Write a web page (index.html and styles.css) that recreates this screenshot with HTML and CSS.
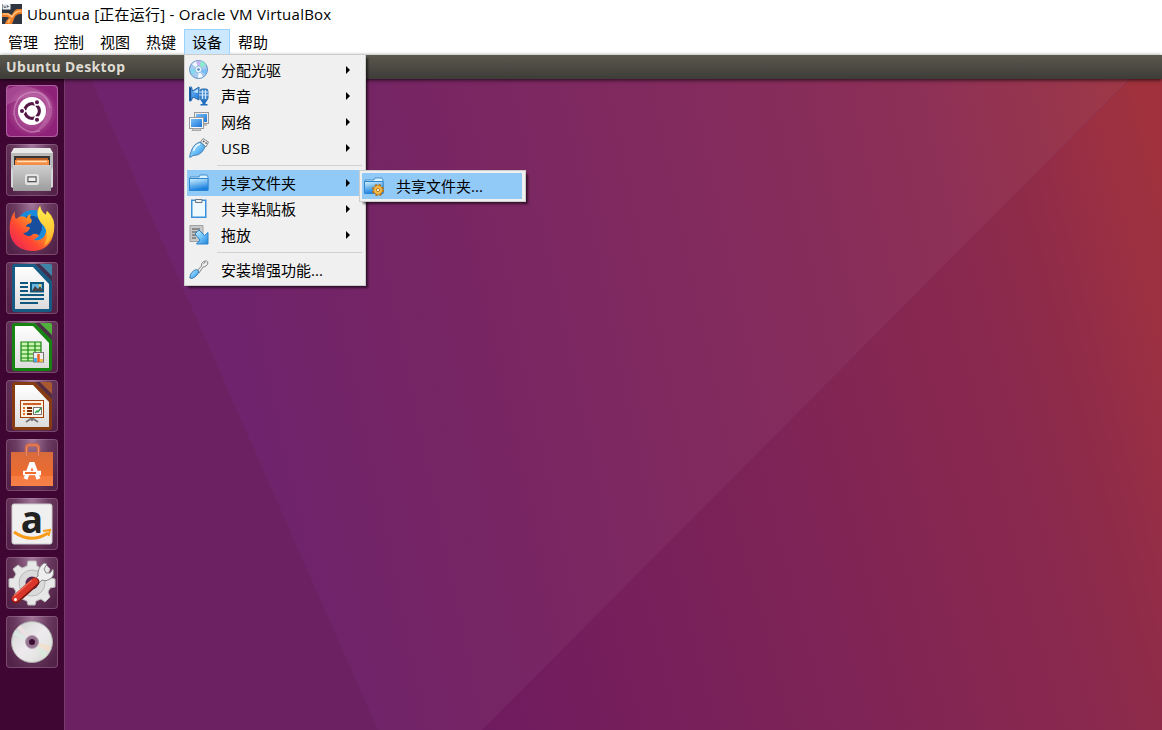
FILE: index.html
```html
<!DOCTYPE html>
<html lang="zh-CN">
<head>
<meta charset="utf-8">
<title>Ubuntua [正在运行] - Oracle VM VirtualBox</title>
<link rel="stylesheet" href="styles.css">
</head>
<body>
<svg class="defs" width="0" height="0" aria-hidden="true">
  <defs>
    <linearGradient id="blue" x1="0" y1="0" x2="1" y2="1"><stop offset="0" stop-color="#d5f1ff"/><stop offset=".5" stop-color="#6fc2fa"/><stop offset="1" stop-color="#2384dd"/></linearGradient>
    <linearGradient id="screen" x1="0" y1="0" x2="1" y2="1"><stop offset="0" stop-color="#7cc0f8"/><stop offset="1" stop-color="#1a74d8"/></linearGradient>
    <linearGradient id="blueV" x1="0" y1="0" x2=".3" y2="1"><stop offset="0" stop-color="#d4f3ff"/><stop offset="1" stop-color="#1880df"/></linearGradient>
    <linearGradient id="paper" x1="0" y1="0" x2="0" y2="1"><stop offset="0" stop-color="#fff"/><stop offset="1" stop-color="#dcdcdc"/></linearGradient>
    <linearGradient id="metal" x1="0" y1="0" x2="0" y2="1"><stop offset="0" stop-color="#cfcfcf"/><stop offset="1" stop-color="#9c9c9c"/></linearGradient>
    <linearGradient id="disc" x1="0" y1="0" x2="1" y2="1"><stop offset="0" stop-color="#c6c6c8"/><stop offset=".3" stop-color="#e2e2e2"/><stop offset=".5" stop-color="#eeeaee"/><stop offset=".7" stop-color="#e6e6e4"/><stop offset="1" stop-color="#cfcfcf"/></linearGradient>
    <linearGradient id="fox" x1="1" y1="0" x2="0" y2="1"><stop offset="0" stop-color="#ffe63e"/><stop offset=".38" stop-color="#ff9a22"/><stop offset=".66" stop-color="#ff4634"/><stop offset="1" stop-color="#e91a63"/></linearGradient>
    <linearGradient id="flame" x1="0" y1="0" x2="0" y2="1"><stop offset="0" stop-color="#fff24d"/><stop offset="1" stop-color="#ffab2a"/></linearGradient>
    <linearGradient id="bag" x1="0" y1="0" x2="0" y2="1"><stop offset="0" stop-color="#d96b3c"/><stop offset=".7" stop-color="#ee6c2f"/><stop offset=".71" stop-color="#f67b40"/><stop offset="1" stop-color="#f58149"/></linearGradient>
    <radialGradient id="swirl"><stop offset="0" stop-color="#c277ae"/><stop offset=".75" stop-color="#a03a88"/><stop offset="1" stop-color="#8e2278"/></radialGradient>
  </defs>
</svg>

<header class="titlebar">
  <svg class="app-icon" width="20" height="20" viewBox="0 0 20 20"><rect width="20" height="20" fill="#2f3541"/><path d="M0 9h6l4 2q2-5 5-6h5v5h-3q-4 1-5 5l-2 5H3q1-4 4-6l-2-1H0z" fill="#ee7d28"/><path d="M1 10h5l4 3q3-6 9-6" fill="none" stroke="#ffc07a" stroke-width="1.600"/><path d="m8 15-2 4" stroke="#ffb25e" stroke-width="2"/><rect x=".5" width="8" height="5.500" fill="#edf0f2"/><path d="M2 1.500v2h2v-2m1.500 2v-2L7 3" stroke="#68717b" fill="none"/></svg>
  <span>Ubuntua [正在运行] - Oracle VM VirtualBox</span>
</header>

<nav class="menubar">
  <span class="top">管理</span><span class="top">控制</span><span class="top">视图</span><span class="top">热键</span>
  <div class="top open">设备
    <div class="menu">
      <div class="item">
        <svg class="mi" viewBox="0 0 20 20"><circle cx="9.500" cy="9.500" r="9" fill="#a9ccee" stroke="#5b8fc4"/><path d="M10 10 3 4l4-3z" fill="#f1f9ff"/><path d="m10 10-3-9 5-.4z" fill="#c8b4f0"/><path d="m10 10 2-9.400 5 3.700z" fill="#8bebcb"/><path d="m10 10 8-1-1 6z" fill="#78bdf8"/><path d="m10 10 4 7-5 1z" fill="#f7fbff"/><path d="m10 10-7 5-2-6z" fill="#81d8ef"/><circle cx="9.500" cy="9.500" r="3.400" fill="#e8f3fc" stroke="#79a8d3" stroke-width=".7"/><circle cx="9.500" cy="9.500" r="1.200" fill="#4281c3"/></svg>
        <span>分配光驱</span><i class="arrow"></i></div>
      <div class="item">
        <svg class="mi" viewBox="0 0 20 20"><path d="M.5 1h2l1 4L10 1v13l-6-3-2 4H.5z" fill="url(#screen)" stroke="#2869aa"/><path d="M1.500 2v12" stroke="#104f94" stroke-width="1.500"/><path d="m4 6 5-3v4z" fill="#bfe2fc"/><rect x="11" y="3" width="8" height="11" rx="2" fill="#4d91d4" stroke="#286caf"/><path d="M10 6h9.500M10 9h9.500M13.500 4v9M16.500 4v9" stroke="#d7edff" stroke-width=".9"/><path d="M11.500 14h7L16.500 17v1h2v1.500h-7V18h2v-1z" fill="#236fbf"/></svg>
        <span>声音</span><i class="arrow"></i></div>
      <div class="item">
        <svg class="mi" viewBox="0 0 20 20"><path d="M14 12h4v2h-4z" fill="#bbb"/><rect x="5.500" y=".5" width="14" height="11" fill="#eee" stroke="#999"/><rect x="7" y="2" width="11" height="8" fill="url(#screen)"/><rect x=".5" y="5.500" width="14" height="11" fill="#f8f8f8" stroke="#999"/><rect x="2" y="7" width="11" height="8" fill="url(#screen)"/><path d="M4 16.800h7l1 1.700H3z" fill="#ddd" stroke="#999" stroke-width=".8"/></svg>
        <span>网络</span><i class="arrow"></i></div>
      <div class="item">
        <svg class="mi" viewBox="0 0 20 20"><path d="m11.500 4 2.500-3.500L19.500 4 17 9z" fill="#eee" stroke="#888"/><path d="m14 3 1.300.9m1.200.8 1.200.8" stroke="#444" stroke-width="1.500"/><path d="M.7 19.300q0-3 1.500-6Q4.500 6 11 4l5 4.500q-2 6.500-8 8.500-5 0-6 2z" fill="url(#blue)" stroke="#4b83b5"/><path d="M4.500 13Q6 7.500 11 6" fill="none" stroke="#eefaff" stroke-width="1.500"/></svg>
        <span>USB</span><i class="arrow"></i></div>
      <hr class="sep">
      <div class="item active">
        <svg class="mi" viewBox="0 0 20 20"><path d="M1 17V4h9l1-2h7l1 2v13z" fill="#daf3ff" stroke="#4b91cc"/><path d="M.5 5.500h18.500v12H.5z" fill="url(#blueV)" stroke="#2e86d0"/></svg>
        <span>共享文件夹</span><i class="arrow"></i>
        <div class="menu submenu">
          <div class="item active">
            <svg class="mi" viewBox="0 0 20 20"><path d="M1 17V4h9l1-2h7l1 2v13z" fill="#daf3ff" stroke="#4b91cc"/><path d="M.5 5.500h18.500v12H.5z" fill="url(#blueV)" stroke="#2e86d0"/><circle cx="14" cy="14" r="5" fill="none" stroke="#ad721c" stroke-width="2.200" stroke-dasharray="2.400 1.527"/><circle cx="14" cy="14" r="4.400" fill="#f5bd4a" stroke="#c98724" stroke-width=".8"/><circle cx="14" cy="14" r="1.600" fill="#fff" stroke="#b97819"/></svg>
            <span>共享文件夹...</span></div>
        </div>
      </div>
      <div class="item">
        <svg class="mi" viewBox="0 0 20 20"><rect x="2" y=".5" width="15.500" height="18.500" fill="#3990db"/><rect x="3.500" y="2" width="12.500" height="15.500" fill="#eef8ff"/><path d="M6.500.5h6.500v3H6.500z" fill="#eee" stroke="#697684"/></svg>
        <span>共享粘贴板</span><i class="arrow"></i></div>
      <div class="item">
        <svg class="mi" viewBox="0 0 20 20"><path d="M1 .5h13v16H1z" fill="#c9c9c9" stroke="#a1a1a1"/><path d="M3 4h8M3 7h6M3 10h4M3 13h4" stroke="#777" stroke-width="1.300"/><path d="m6 9 4-4 5.500 5.500L19 7.500v11.500H7.500l3.500-4z" fill="url(#blue)" stroke="#2982c9"/></svg>
        <span>拖放</span><i class="arrow"></i></div>
      <hr class="sep">
      <div class="item">
        <svg class="mi" viewBox="0 0 20 20"><path d="m8 11 4.500-5q-.5-2.500 2-4.500Q18 0 18.800 2q.5 2.500-1.800 4-1.500 1-3 1l-4 6z" fill="#eee" stroke="#858585"/><path d="M14.500 3.500 16.500 2" stroke="#777"/><path d="M.8 18q-.3-4 4-7.500 3-2 5 .5.200 3-4 6-3 2.300-5 1z" fill="url(#blue)" stroke="#417dae"/></svg>
        <span>安装增强功能...</span></div>
    </div>
  </div>
  <span class="top">帮助</span>
</nav>

<main class="guest">
  <div class="panel">Ubuntu Desktop</div>
  <div class="desktop">
    <aside class="launcher">
      <div class="tile"><svg viewBox="0 0 52 52"><rect x=".5" y=".5" width="51" height="51" rx="4" fill="url(#swirl)" stroke="#b060a2"/><path d="M1 4Q20-4 37 8q13 9 8 25-6 12-18 15 12-9 14-22C41 9 25 7 1 20z" fill="#d99cca" opacity=".3"/><path d="M8 30Q8 9 27 7q14 0 17 16M8 26q1 17 17 21l9-1" fill="none" stroke="#dba5cf" stroke-width="1.500" opacity=".5"/><circle cx="26" cy="26" r="14" fill="#fff"/><circle cx="26" cy="26" r="7.300" fill="none" stroke="#551746" stroke-width="3.300"/><g stroke="#fff" stroke-width="1.300"><path d="m26 26 6-10M26 26H13m13 0 6 10"/><circle cx="31" cy="17.300" r="2.700" fill="#551746"/><circle cx="16" cy="26" r="2.700" fill="#551746"/><circle cx="31" cy="34.700" r="2.700" fill="#551746"/></g><circle cx="26" cy="26" r="5.500" fill="#fff"/></svg></div>
      <div class="tile"><svg viewBox="0 0 52 52"><path d="M8 4h36l3 5v34H5V9z" fill="#bababa"/><path d="M8 4h36l3 5H5z" fill="#e9e9e9"/><path d="M8 12h36v10H8z" fill="#393331"/><path d="M10 14h32v2H10z" fill="#bc612a"/><path d="M9 16h34v5H9z" fill="#f58c45"/><path d="M11 17.500h30" stroke="#ffe1b7" stroke-width="1.500"/><path d="M7 21h38v26H7z" fill="url(#metal)"/><path d="M5 10v13l2 3v18l-2-1zM47 10v13l-2 3v18l2-1z" fill="#d7d7d7"/><rect x="20" y="31" width="12" height="9" rx="1.500" fill="#bbb" stroke="#e4e4e4" stroke-width="2"/><rect x="22" y="33" width="8" height="4.500" fill="#eee" stroke="#555"/></svg></div>
      <div class="tile"><svg viewBox="0 0 52 52"><circle cx="27" cy="24" r="17" fill="#188bdc"/><path d="M19 14q10-4 16 4 4 10-5 17-10 2-15-5z" fill="#174f9e"/><path d="M9 8q-1 5 1 8 5-5 11-1 0-3 4-4-2 4 1 6l-1 3q-5 1-5 4 3-1 4 1-2 5-7 5 5 6 10 1 4-1 6 2-3 2-5 4 12 2 13-14-8-4-9-10Q30 8 34 3q1 6 6 9l1-4q9 7 7 20-3 20-22 20Q8 47 4 31 2 17 9 8z" fill="url(#fox)"/><path d="M34 3q1 6 6 9l1-4q8 8 7 19-2 10-10 16 4-9 2-16-1-4-5-7-6-8-1-17z" fill="url(#flame)"/></svg></div>
      <div class="tile"><svg viewBox="0 0 52 52"><path d="M9 2h20l17 17v28q0 3-3 3H9q-3 0-3-3V5q0-3 3-3z" fill="#155b83"/><path d="M29 2h5l12 12v5z" fill="#3c2f50"/><path d="M34 2h10q2 0 2 2v10z" fill="#3f85a8"/><path d="M9 5h18l16 17v25H9z" fill="url(#paper)"/><path d="M14 21h8M14 25h8M14 29h8M14 33h24M14 37h24M14 41h18" stroke="#10577f" stroke-width="2"/><rect x="25" y="21" width="12" height="8.500" fill="#69b8df" stroke="#10577f" stroke-width="2"/><path d="m26 29 3-5 3 3 2-3 3 5z" fill="#444"/><circle cx="34" cy="23.500" r="1.300" fill="#f5c454"/></svg></div>
      <div class="tile"><svg viewBox="0 0 52 52"><path d="M9 2h20l17 17v28q0 3-3 3H9q-3 0-3-3V5q0-3 3-3z" fill="#168411"/><path d="M29 2h5l12 12v5z" fill="#4a3045"/><path d="M34 2h10q2 0 2 2v10z" fill="#4fb03c"/><path d="M9 5h18l16 17v25H9z" fill="url(#paper)"/><path d="M15 21h20v19H15z" fill="#c9f5ae"/><path d="M15 21h20v19H15zM15 25h20M15 29h20M15 33h20M15 37h20M22 21v19M29 21v19" fill="none" stroke="#168411" stroke-width="1.200"/><rect x="27.500" y="31.500" width="10" height="9.500" fill="#eee" stroke="#777"/><path d="M29.500 41v-4" stroke="#26a0e8" stroke-width="2.500"/><path d="M32.500 41v-8" stroke="#ea6222" stroke-width="2.500"/><path d="M35.500 41v-3" stroke="#f2b62c" stroke-width="2.500"/></svg></div>
      <div class="tile"><svg viewBox="0 0 52 52"><path d="M9 2h20l17 17v28q0 3-3 3H9q-3 0-3-3V5q0-3 3-3z" fill="#873b11"/><path d="M29 2h5l12 12v5z" fill="#552c3f"/><path d="M34 2h10q2 0 2 2v10z" fill="#a9592f"/><path d="M9 5h18l16 17v25H9z" fill="url(#paper)"/><path d="m20 42 6-4 6 4M26 37v4" stroke="#777" stroke-width="2" fill="none"/><rect x="14.500" y="20.500" width="23" height="17" fill="#fff1df" stroke="#a43f0d"/><path d="M17 24h18" stroke="#d16027" stroke-width="2"/><path d="M17 28h2M17 31h2M17 34h2" stroke="#e36f31" stroke-width="2"/><path d="M21 28h5M21 31h5M21 34h5" stroke="#792e09" stroke-width="2"/><rect x="27.500" y="27.500" width="8" height="7" fill="#fff" stroke="#777"/><path d="m29 33 2-2 1 1 3-4" fill="none" stroke="#249b40" stroke-width="1.300"/></svg></div>
      <div class="tile"><svg viewBox="0 0 52 52"><path d="M5 13h42v34H5z" fill="url(#bag)"/><path d="M20.500 17V9q0-3 3-3h6q3 0 3 3v8" fill="none" stroke="#cf6846" stroke-width="3.500"/><path d="M20.500 17V9q0-3 3-3h6q3 0 3 3v8" fill="none" stroke="#ed8b68"/><path d="m19.500 40 5.500-15h2l5.500 15" fill="none" stroke="#fff" stroke-width="4"/><path d="M17 34h18" stroke="#fff" stroke-width="4.500"/><path d="M19 34h11" stroke="#ef6e2e" stroke-width="2"/></svg></div>
      <div class="tile"><svg viewBox="0 0 52 52"><rect x="6" y="6" width="40" height="40" rx="2" fill="#f0f0f0" stroke="#ccc"/><text class="amazon" x="26" y="34.500" text-anchor="middle">a</text><path d="M8 34q17 12 34 1" stroke="#f79b18" stroke-width="3" fill="none"/><path d="m37 33 7-1-1.500 6" stroke="#f79b18" stroke-width="2" fill="none"/></svg></div>
      <div class="tile"><svg viewBox="0 0 52 52"><path d="m21 9 1-5h8l1 5 4 2 5-3 4 4-2 5 2 4 5 1v8l-5 1-2 4 2 5-5 5-4-3-5 2-1 4h-7l-1-4-5-2-4 3-5-5 3-5-2-4-5-1v-8l5-1 2-4-3-5 5-4 4 3z" fill="#e7e7e7" stroke="#bdbdbd"/><circle cx="26" cy="26" r="13" fill="#dadada" stroke="#b9b9b9"/><circle cx="26" cy="26" r="6.500" fill="#5c2850"/><path d="m27 23 5-4q-1-8 6-13l3 1-3 5 2 4 4 0 3-4q2 7-3 10-4 3-8 1l-5 5z" fill="#eee" stroke="#888"/><path d="m10 42 19-17" stroke="#7e1714" stroke-width="9" stroke-linecap="round"/><path d="m9.500 41.500 19-17" stroke="#d93529" stroke-width="7" stroke-linecap="round"/><path d="m8 39 18-16" stroke="#f1695a" stroke-width="1.500"/><circle cx="9.500" cy="42.500" r="1.500" fill="#fff"/></svg></div>
      <div class="tile"><svg viewBox="0 0 52 52"><circle cx="26" cy="26" r="20.500" fill="url(#disc)" stroke="#aaa"/><path d="m26 26-19-7 2-5z" fill="#d7ebe5" opacity=".7"/><path d="m26 26-15-14 4-3z" fill="#f3dfe4" opacity=".7"/><path d="m26 26 19 4-2 6z" fill="#f7ddc4" opacity=".7"/><path d="m26 26 16 12-4 4z" fill="#d5ecd8" opacity=".7"/><circle cx="26" cy="26" r="6.500" fill="#94738f" stroke="#b8a4b5"/><circle cx="26" cy="26" r="3" fill="#3c0d33"/></svg></div>
    </aside>
    <div class="wallpaper"></div>
  </div>
</main>
</body>
</html>
```
FILE: styles.css
```css
* { box-sizing: border-box; }
body {
  margin: 0;
  width: 1162px;
  height: 730px;
  overflow: hidden;
  display: flex;
  flex-direction: column;
  background: #fff;
  color: #000;
  font: 15px/26px "Open Sans", "Noto Sans CJK SC", sans-serif;
}
.defs { position: absolute; }
.titlebar {
  height: 29px;
  flex: none;
  display: flex;
  align-items: center;
  gap: 5px;
  padding: 0 0 1px 2px;
  letter-spacing: .24px;
  white-space: nowrap;
}
.menubar { height: 26px; flex: none; display: flex; }
.top {
  width: 46px;
  height: 26px;
  padding-left: 8px;
  line-height: 26px;
  white-space: nowrap;
}
.open {
  position: relative;
  z-index: 5;
  padding-left: 7px;
  line-height: 24px;
  background: #cce8ff;
  border: 1px solid #99d1ff;
}
.menu {
  position: absolute;
  left: -1px;
  top: 24px;
  width: 182px;
  padding: 2px;
  background: #f0f0f0;
  border: 1px solid #ccc;
  box-shadow: 3px 3px 2px -1px rgba(0, 0, 0, .55);
}
.item {
  position: relative;
  display: flex;
  align-items: center;
  height: 26px;
  padding-left: 2px;
  line-height: 26px;
}
.item span { flex: 1; margin-left: 12px; white-space: nowrap; }
.mi { width: 20px; height: 20px; flex: none; }
.active { background: #91c9f7; }
.arrow {
  margin-right: 13px;
  border: 4px solid transparent;
  border-left-color: #000;
  border-right: 0;
}
.sep { height: 1px; margin: 4px 1px 4px 30px; border: 0; background: #d2d2d2; }
.submenu { left: 172px; top: 0; width: 167px; padding-right: 3px; }
.guest { flex: 1; display: flex; flex-direction: column; }
.panel {
  position: relative;
  z-index: 1;
  height: 24px;
  flex: none;
  padding-left: 6px;
  background: linear-gradient(#5b584d, #3d3c38);
  box-shadow: 0 1px 4px rgba(0, 0, 0, .75);
  color: #dfdbd2;
  font: bold 14px/24px "Noto Sans", sans-serif;
  letter-spacing: .35px;
}
.desktop { flex: 1; display: flex; }
.launcher {
  width: 65px;
  padding: 6px 0 0 6px;
  display: flex;
  flex-direction: column;
  gap: 7px;
  background: #400633;
  border-right: 1px solid #783b70;
}
.tile {
  width: 52px;
  height: 52px;
  border-radius: 4px;
  background: radial-gradient(ellipse at 50% 0, #a17799, #6b3b60 45%, #532248 85%);
  box-shadow: inset 0 0 0 1px rgba(205, 160, 195, .3);
}
.tile svg { display: block; width: 52px; height: 52px; overflow: visible; }
.amazon { font: bold 37px "Open Sans", sans-serif; fill: #222; }
.wallpaper { flex: 1; position: relative; background: #6c2262; }
.wallpaper::before, .wallpaper::after { content: ""; position: absolute; inset: 0; }
.wallpaper::before {
  background: linear-gradient(78deg, #6f236c 20%, #762564 36%, #812a5f 58%, #8d3057 80%, #9f3946 98%);
  clip-path: polygon(26px 0, 1065px 0, 417px 651px, 313px 651px);
}
.wallpaper::after {
  background: linear-gradient(75deg, #6f1b5f 33%, #7d2357 60%, #8a294e 81%, #8f2b49 86.5%, #9b3042 94%, #a1323d 98%);
  clip-path: polygon(1065px 0, 1097px 0, 1097px 651px, 417px 651px);
}
```
